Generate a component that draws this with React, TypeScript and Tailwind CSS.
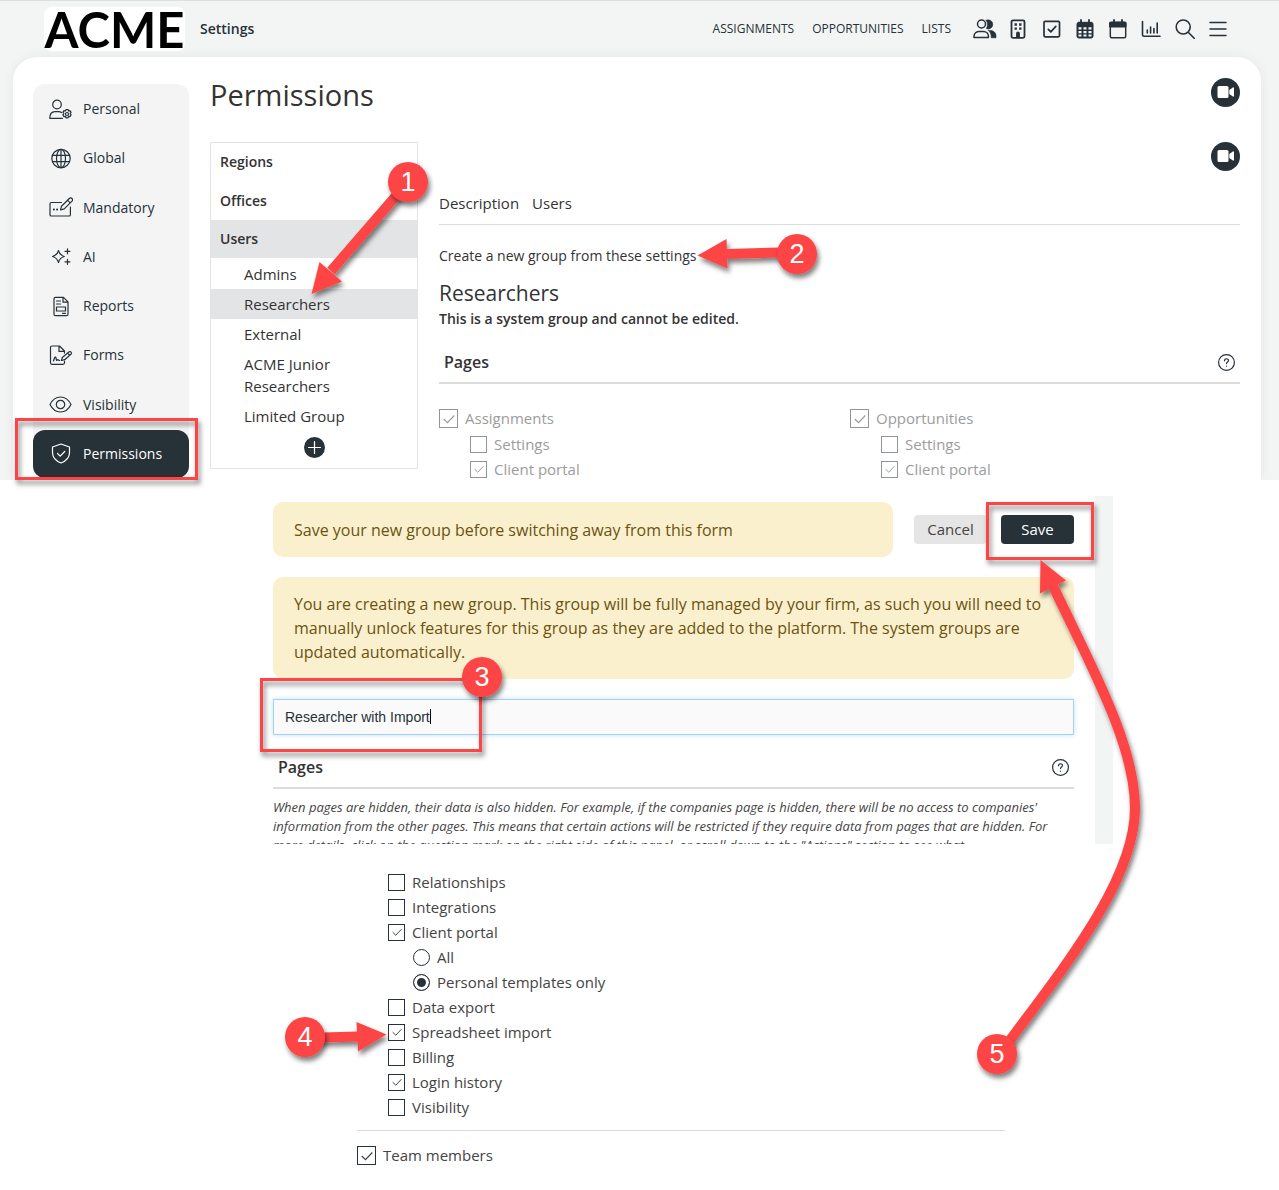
import type { ReactNode } from 'react';
import { clsx } from 'clsx';

function Icon({ children, className = 'size-5', box = '0 0 20 20', width = 1.4 }: {
  children: ReactNode;
  className?: string;
  box?: string;
  width?: number;
}) {
  return (
    <svg
      viewBox={box}
      className={clsx('shrink-0', className)}
      fill="none"
      stroke="currentColor"
      strokeWidth={width}
      strokeLinecap="round"
      strokeLinejoin="round"
      aria-hidden="true"
    >
      {children}
    </svg>
  );
}

const toolbar = [
  {
    label: 'People',
    icon: (
      <Icon className="h-5 w-6 -mx-0.5" box="0 0 24 20" width={1.5}>
        <circle cx="8.5" cy="5" r="4" />
        <path d="M1 18.5v-1.2c0-3 2.6-4.8 5.2-4.8h4.2c2.8 0 5 2 5 4.800v1.200z" />
        <path d="M13.2 1.2a4.600 4.600 0 1 1 .2 8.400c1.500-2.600 1.400-6-.2-8.400zM15.500 11.500h1.800c3 0 5.700 2 5.700 5v2.300h-4.800c.2-3-.6-5.400-2.700-7.300z" fill="currentColor" strokeWidth={0.6} />
      </Icon>
    ),
  },
  {
    label: 'Companies',
    icon: (
      <Icon width={1.8}>
        <rect x="3.5" y="1.3" width="13" height="17.5" rx="1.5" />
        <g fill="currentColor" stroke="none">
          <path d="M6.500 4.300h2.400v2.400H6.500zM11.100 4.300h2.400v2.400h-2.400zM6.500 8.400h2.400v2.400H6.500zM11.100 8.400h2.400v2.400h-2.400z" />
          <path d="M8.100 19v-4.500a1.900 1.900 0 0 1 3.800 0V19z" />
        </g>
      </Icon>
    ),
  },
  {
    label: 'Tasks',
    icon: (
      <Icon width={1.7}>
        <rect x="2" y="2.3" width="15.5" height="15.5" rx="1.2" />
        <path d="M6.300 10.300l2.500 2.500 5-5.400" />
      </Icon>
    ),
  },
  {
    label: 'Planner',
    icon: (
      <Icon>
        <rect x="2" y="3.3" width="16" height="15.7" rx="1.8" fill="currentColor" strokeWidth={1} />
        <path d="M6 1v3M14 1v3" strokeWidth={1.8} />
        <path d="M3.500 8.300h3v2.300h-3zM8.500 8.300h3v2.300h-3zM13.500 8.300h3v2.300h-3zM3.500 12h3v2.300h-3zM8.500 12h3v2.300h-3zM13.500 12h3v2.300h-3zM3.500 15.600h3v2h-3zM8.500 15.600h3v2h-3zM13.500 15.600h3v2h-3z" fill="#f3f5f4" stroke="none" />
      </Icon>
    ),
  },
  {
    label: 'Calendar',
    icon: (
      <Icon>
        <rect x="2.3" y="3.3" width="15.4" height="15.5" rx="1.5" strokeWidth={1.5} />
        <path d="M2 3.300h16V8H2z" fill="currentColor" strokeWidth={1} />
        <path d="M6 1v3M14 1v3" strokeWidth={1.8} />
      </Icon>
    ),
  },
  {
    label: 'Statistics',
    icon: (
      <Icon width={1.6}>
        <path d="M1.500 2.500v13.200c0 1 .6 1.600 1.600 1.600H19M6.300 11v3M9.600 8v6M12.900 9.500V14M16.200 4v10" />
      </Icon>
    ),
  },
  {
    label: 'Search',
    icon: (
      <Icon width={1.6}>
        <circle cx="8.2" cy="8" r="7" />
        <path d="M13.200 13.200l6 6" />
      </Icon>
    ),
  },
  {
    label: 'Menu',
    icon: (
      <Icon width={1.5}>
        <path d="M2 3.500h16M2 10h16M2 16.500h16" />
      </Icon>
    ),
  },
];

const sideItems = [
  {
    label: 'Personal',
    icon: (
      <>
        <circle cx="8" cy="5.5" r="4.3" />
        <path d="M13.500 19.300H.800c0-5 2.700-6.600 5.200-6.600h3.500c1.200 0 2.200.2 3 .8" />
        <circle cx="18" cy="15" r="1.5" />
        <path d="M17 10.500h2l.4 1.500 1.500-.4 1.200 1.800-1 1.200 1 1.300-1.200 1.800-1.500-.4-.4 1.600h-2l-.5-1.600-1.500.4-1.100-1.800 1-1.300-1-1.200 1.100-1.800 1.500.4z" />
      </>
    ),
  },
  {
    label: 'Global',
    icon: (
      <>
        <circle cx="12" cy="10.5" r="9.2" />
        <ellipse cx="12" cy="10.5" rx="4.5" ry="9.2" />
        <path d="M12 1.300v18.400M3.500 7.300h17M3.500 13.700h17" />
      </>
    ),
  },
  {
    label: 'Mandatory',
    icon: (
      <>
        <path d="M12.500 5.500H2.200C1.400 5.500 1 6 1 6.700v11c0 .8.400 1.300 1.200 1.300h18c.8 0 1.200-.5 1.200-1.300V10" />
        <path d="M11.500 12.800l1-3.600L20.300 1.500c.9-.8 2-.8 2.700 0 .8.800.7 1.800 0 2.600l-7.700 7.700zM18.500 3.200l2.700 2.700" />
        <path d="M4.800 12.500h.2M8 12.500h.2" strokeWidth={1.8} />
      </>
    ),
  },
  {
    label: 'AI',
    icon: (
      <>
        <path d="M9.500 4.500c.9 3.600 2 4.900 5.800 6-3.800 1.100-4.900 2.400-5.800 6-.9-3.600-2.300-4.900-6-6 3.700-1.100 5.100-2.400 6-6z" />
        <path d="M18.500 2.800v5M16 5.300h5M18.500 13.300v5M16 15.800h5" />
      </>
    ),
  },
  {
    label: 'Reports',
    icon: (
      <>
        <path d="M5 2.800c0-.9.600-1.500 1.500-1.500h8L19 5.800v12.400c0 .9-.6 1.500-1.500 1.500h-11C5.600 19.700 5 19.100 5 18.200zM14 1.500v4.700h4.800" />
        <path d="M7.500 5h4M7.500 8h4M7.500 11h9v4h-9zM13.500 17.300h3" />
      </>
    ),
  },
  {
    label: 'Forms',
    icon: (
      <>
        <path d="M15.500 16v1.800c0 1-.6 1.500-1.500 1.500H3c-.9 0-1.500-.5-1.500-1.500V2.500C1.500 1.600 2.100 1 3 1h7.500l5 5v2M10 1.200v5.200h5.200" />
        <path d="M4.500 16c1-4 2-5 2.500-3s.2 3 1.200 2 1.300.6 2.500.5" />
        <path d="M12.500 15.500l.8-3 6.900-5.700c1.400-.8 3 .8 2 2.200l-6.500 5.700zM18.500 8.200l2.200 2.200" />
      </>
    ),
  },
  {
    label: 'Visibility',
    icon: (
      <>
        <path d="M1 10.500C3.500 5.500 7.500 3 11.500 3S19.500 5.500 22 10.500c-2.500 5-6.500 7.500-10.500 7.500S3.500 15.500 1 10.500z" />
        <circle cx="11.5" cy="10.5" r="4.2" />
      </>
    ),
  },
  {
    label: 'Permissions',
    active: true,
    icon: (
      <>
        <path d="M12 1l8.500 3v5.500c0 5-3.500 8.500-8.500 10.500-5-2-8.500-5.500-8.500-10.500V4z" />
        <path d="M8.500 10.500l2.700 2.700 4.500-4.700" />
      </>
    ),
  },
];

const groups = ['Admins', 'Researchers', 'External', 'ACME Junior Researchers', 'Limited Group'];

function VideoButton() {
  return (
    <button aria-label="Watch video" className="flex size-[29px] shrink-0 items-center justify-center rounded-full bg-[#263138] text-white">
      <svg viewBox="0 0 18 14" className="h-3.5 w-[18px]" fill="currentColor" aria-hidden="true">
        <rect x="0.5" y="0" width="11" height="12" rx="1.5" />
        <path d="M12.300 4l3.500-2.600c.5-.3 1.200 0 1.200.6v8c0 .6-.7.900-1.200.6L12.300 8z" />
      </svg>
    </button>
  );
}

function SectionTitle({ children }: { children: ReactNode }) {
  return (
    <div className="flex h-[42px] items-center justify-between border-b-2 border-[#dcdcdc] px-[5px]">
      <h3 className="text-base font-semibold text-[#333]">{children}</h3>
      <button aria-label="Help" className="text-[#263138]">
        <Icon className="size-[17px]" box="0 0 17 17" width={1.2}>
          <circle cx="8.5" cy="8.5" r="7.9" />
          <path d="M6.500 6.800c0-2.700 4-2.700 4-.3 0 1.500-2 1.500-2 3.100M8.500 12v.2" />
        </Icon>
      </button>
    </div>
  );
}

function Check({ label, checked, disabled, big, indent }: {
  label: string;
  checked?: boolean;
  disabled?: boolean;
  big?: boolean;
  indent?: boolean;
}) {
  return (
    <label
      className={clsx(
        'flex h-[25px] items-center text-[15px]',
        disabled ? 'text-[#9c9c9c]' : 'text-[#444]',
        indent && 'ml-[31px]'
      )}
    >
      <span className="grid items-center justify-items-center">
        <input
          type="checkbox"
          defaultChecked={checked}
          disabled={disabled}
          className={clsx(
            'peer col-start-1 row-start-1 appearance-none border bg-white',
            big ? 'size-[19px]' : 'size-[17px]',
            disabled ? 'border-[#8f9599]' : 'border-[#263138]'
          )}
        />
        <svg
          viewBox="0 0 12 10"
          className={clsx('pointer-events-none invisible col-start-1 row-start-1 peer-checked:visible', big ? 'w-3' : 'w-2.5')}
          fill="none"
          stroke="currentColor"
          aria-hidden="true"
        >
          <path d="M.8 5l3.700 3.700L11.300 1.500" strokeWidth={1.2} />
        </svg>
      </span>
      <span className="ml-[7px]">{label}</span>
    </label>
  );
}

function Radio({ label, checked }: { label: string; checked?: boolean }) {
  return (
    <label className="ml-[25px] flex h-[25px] items-center gap-[7px] text-[15px] text-[#444]">
      <input
        type="radio"
        name="portal-scope"
        defaultChecked={checked}
        className="size-[17px] appearance-none rounded-full border border-[#263138] bg-white checked:bg-[#263138] checked:shadow-[inset_0_0_0_3px_#fff]"
      />
      {label}
    </label>
  );
}

function PageChecks({ name }: { name: string }) {
  return (
    <div className="flex-1">
      <div className="pb-px">
        <Check label={name} checked disabled big />
      </div>
      <Check label="Settings" disabled indent />
      <Check label="Client portal" checked disabled indent />
    </div>
  );
}

function Badge({ x, y, n }: { x: number; y: number; n: number }) {
  return (
    <>
      <circle cx={x} cy={y} r="20" fill="#fd4444" filter="url(#shade)" />
      <text x={x} y={y + 9} textAnchor="middle" fill="#fff" fontSize="27">
        {n}
      </text>
    </>
  );
}

// Numbered walkthrough markers laid over the page
function Callouts() {
  return (
    <svg
      viewBox="0 0 1279 1190"
      className="pointer-events-none absolute left-0 top-0 h-[1190px] w-[1279px] font-['Liberation_Sans',Arial,sans-serif]"
    >
      <defs>
        <filter id="shade" filterUnits="userSpaceOnUse" x="0" y="0" width="1279" height="1190">
          <feDropShadow dx="2" dy="4" stdDeviation="2.5" floodColor="#000" floodOpacity="0.5" />
        </filter>
      </defs>
      <g filter="url(#shade)" fill="none" stroke="#fd4444" strokeWidth="3">
        <rect x="16.5" y="419.5" width="180" height="59" />
        <rect x="261.5" y="679.5" width="219" height="71" />
        <rect x="987.5" y="503.5" width="105" height="55" />
      </g>
      <g filter="url(#shade)" fill="none" stroke="#fd4444" strokeWidth="10">
        <path d="M408 182L331 271" />
        <path d="M797 252L727 254" />
        <path d="M305 1038L358 1036.500" />
        <path d="M1005 1047C1060 972 1135 882 1135 808C1135 745 1092 668 1053 586" />
        <g fill="#fd4444" stroke="none">
          <path d="M311.500 294L319.500 262L342 281.500z" />
          <path d="M697.500 255.500L726.500 239L727.500 268.500z" />
          <path d="M386.500 1034.500L356.500 1022L358 1051.500z" />
          <path d="M1040.500 560L1066 580.500L1040 593.500z" />
        </g>
      </g>
      <Badge x={408} y={182} n={1} />
      <Badge x={797} y={254} n={2} />
      <Badge x={482} y={677} n={3} />
      <Badge x={305} y={1037} n={4} />
      <Badge x={997} y={1054} n={5} />
    </svg>
  );
}

export default function App() {
  return (
    <div className="relative min-h-screen overflow-x-hidden bg-white pb-6 font-['Open_Sans','Noto_Sans',sans-serif] text-[#333]">
      <section className="overflow-hidden border-t border-[#dcdfde] bg-[#f3f5f4]">
        <header className="flex h-14 items-center pl-11 pr-[51px] text-[#263138]">
          <a href="#home" className="flex h-11 w-[141px] items-center justify-center rounded-lg bg-white font-['Lato',sans-serif] text-[49px] font-bold leading-[44px] text-black">
            ACME
          </a>
          <span className="ml-[15px] text-sm font-semibold">Settings</span>
          <nav className="ml-auto flex gap-[18px] text-xs">
            <a href="#assignments">ASSIGNMENTS</a>
            <a href="#opportunities">OPPORTUNITIES</a>
            <a href="#lists">LISTS</a>
          </nav>
          <div className="ml-6 flex w-[253px] justify-between">
            {toolbar.map((t) => (
              <button key={t.label} aria-label={t.label} className="flex w-5 justify-center">
                {t.icon}
              </button>
            ))}
          </div>
        </header>

        <div className="ml-[13px] mr-[18px] flex rounded-t-3xl bg-white pl-5 pr-[21px] pt-[27px] shadow-[0_0_12px_rgba(0,0,0,0.06)]">
          <nav className="mb-0.5 flex h-[394px] w-[156px] shrink-0 flex-col justify-between rounded-t-xl bg-[#f4f4f4] pt-px text-sm">
            {sideItems.map((item) => (
              <a
                key={item.label}
                href="#settings"
                className={clsx(
                  'flex h-12 items-center gap-2.5 pl-4',
                  item.active ? 'rounded-xl bg-[#263138] text-white' : 'text-[#263138]'
                )}
              >
                <Icon className="h-[21px] w-6" box="0 0 24 21" width={1.2}>
                  {item.icon}
                </Icon>
                {item.label}
              </a>
            ))}
          </nav>

          <main className="-mb-0.5 -mt-1.5 ml-[21px] min-w-0 flex-1">
            <div className="flex h-16 items-start justify-between">
              <h1 className="text-[29px] leading-[34px]">Permissions</h1>
              <VideoButton />
            </div>
            <div className="flex items-start gap-[21px]">
              <div className="w-[208px] shrink-0 border border-[#e3e4e6] pb-2.5 text-[15px] leading-[22px]">
                <div className="text-sm font-semibold leading-[22px]">
                  <h2 className="px-[9px] pb-[9px] pt-2">Regions</h2>
                  <h2 className="px-[9px] py-2">Offices</h2>
                  <h2 className="bg-[#e3e4e6] px-[9px] py-2">Users</h2>
                </div>
                <ul className="pt-px">
                  {groups.map((g) => (
                    <li key={g} className={clsx('py-1 pl-[33px] pr-12', g === 'Researchers' && 'bg-[#e3e4e6]')}>
                      <a href="#group">{g}</a>
                    </li>
                  ))}
                </ul>
                <button aria-label="Add group" className="mx-auto mt-1.5 flex size-[21px] items-center justify-center rounded-full bg-[#263138] text-white">
                  <Icon className="size-[21px]" box="0 0 21 21" width={1.2}>
                    <path d="M10.500 4.500v12M4.500 10.500h12" />
                  </Icon>
                </button>
              </div>

              <div className="min-w-0 flex-1">
                <div className="flex justify-end">
                  <VideoButton />
                </div>
                <div className="flex gap-[13px] border-b border-[#dcdcdc] pb-2.5 pt-[21px] text-[15px] leading-[22px]">
                  <a href="#description">Description</a>
                  <a href="#users">Users</a>
                </div>
                <a href="#new" className="mt-5 block text-sm leading-[22px]">
                  Create a new group from these settings
                </a>
                <h2 className="mt-3 text-[21px] leading-7">Researchers</h2>
                <p className="mb-[11px] text-sm font-semibold leading-6">This is a system group and cannot be edited.</p>
                <SectionTitle>Pages</SectionTitle>
                <div className="flex gap-[21px] pt-[22px]">
                  <PageChecks name="Assignments" />
                  <PageChecks name="Opportunities" />
                </div>
              </div>
            </div>
          </main>
        </div>
      </section>

      <section className="ml-[273px] mr-[166px] mt-4 border-r-[18px] border-[#f3f5f4] pr-[21px] pt-1.5">
        <div className="flex items-center">
          <p className="flex min-h-[55px] flex-1 items-center rounded-[10px] bg-[#fbf0ce] px-[21px] text-base text-[#6b5310]">
            Save your new group before switching away from this form
          </p>
          <button className="ml-[21px] h-[29px] w-[73px] rounded-sm bg-[#e5e5e5] text-[15px] text-[#444]">Cancel</button>
          <button className="ml-3.5 h-[29px] w-[73px] rounded-sm bg-[#263138] text-[15px] text-white">Save</button>
        </div>
        <p className="mt-5 rounded-[10px] bg-[#fbf0ce] px-[21px] py-[15px] text-base text-[#6b5310]">
          You are creating a new group. This group will be fully managed by your firm, as such you will need to
          manually unlock features for this group as they are added to the platform. The system groups are updated
          automatically.
        </p>
        <div className="relative mb-3 mt-5">
          <input
            aria-label="Group name"
            defaultValue="Researcher with Import"
            className="block h-9 w-full border border-[#a8d1f0] bg-[#fafafa] px-[11px] font-['Liberation_Sans',Arial,sans-serif] text-sm text-[#263138] shadow-[0_0_5px_#bfe0f7] outline-none"
          />
          <span className="absolute left-[157px] top-2.5 h-[15px] w-px bg-black" />
        </div>
        <SectionTitle>Pages</SectionTitle>
        <p className="mt-[9px] max-h-[46px] overflow-hidden text-[13px] italic leading-[19px] text-[#444]">
          When pages are hidden, their data is also hidden. For example, if the companies page is hidden, there will be
          no access to companies' information from the other pages. This means that certain actions will be restricted
          if they require data from pages that are hidden. For more details, click on the question mark on the right
          side of this panel, or scroll down to the "Actions" section to see what
        </p>
      </section>

      <section className="ml-[357px] mr-[274px] mt-[26px]">
        <div className="border-b border-[#dcdcdc] pb-2.5 pl-[31px]">
          <Check label="Relationships" />
          <Check label="Integrations" />
          <Check label="Client portal" checked />
          <Radio label="All" />
          <Radio label="Personal templates only" checked />
          <Check label="Data export" />
          <Check label="Spreadsheet import" checked />
          <Check label="Billing" />
          <Check label="Login history" checked />
          <Check label="Visibility" />
        </div>
        <div className="pt-3">
          <Check label="Team members" checked big />
        </div>
      </section>

      <Callouts />
    </div>
  );
}
